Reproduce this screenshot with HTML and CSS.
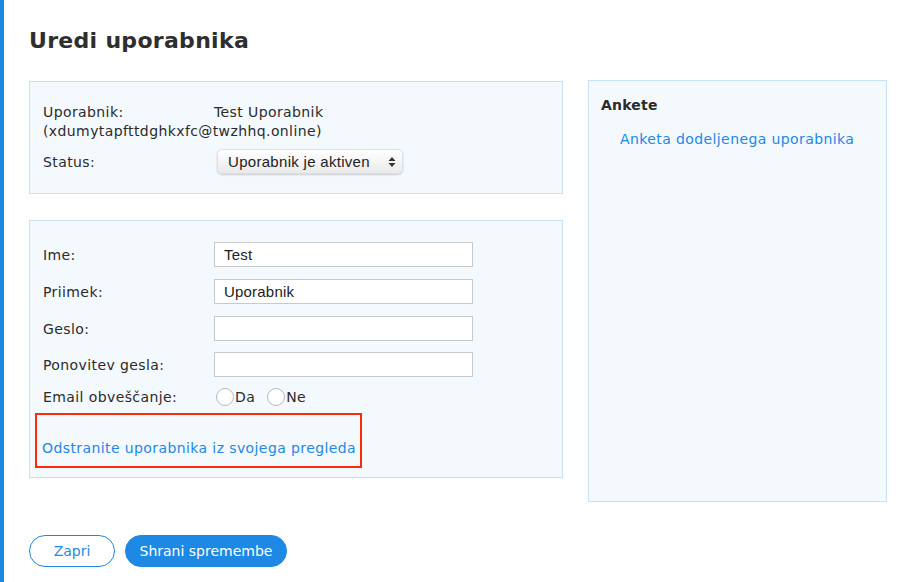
FILE: index.html
```html
<!DOCTYPE html>
<html lang="sl">
<head>
<meta charset="utf-8">
<title>Uredi uporabnika</title>
<link rel="stylesheet" href="styles.css">
</head>
<body>
<div class="page">
  <main class="content">
    <h1 class="title">Uredi uporabnika</h1>
    <div class="columns">
      <div class="left">
        <section class="box info">
          <div class="user-line"><span class="label">Uporabnik:</span><span class="value">Test Uporabnik</span> <span class="value">(xdumytapfttdghkxfc@twzhhq.online)</span></div>
          <div class="row status-row">
            <span class="label">Status:</span>
            <div class="select">
              <span>Uporabnik je aktiven</span>
              <svg class="arrows" width="8" height="12" viewBox="0 0 8 12"><path d="M4 1 L7.5 5 H0.5 Z M4 11 L7.5 7 H0.5 Z" fill="#333"/></svg>
            </div>
          </div>
        </section>
        <section class="box form">
          <div class="row field"><span class="label">Ime:</span><div class="input">Test</div></div>
          <div class="row field"><span class="label">Priimek:</span><div class="input">Uporabnik</div></div>
          <div class="row field"><span class="label">Geslo:</span><div class="input"></div></div>
          <div class="row field"><span class="label">Ponovitev gesla:</span><div class="input"></div></div>
          <div class="row radios-row">
            <span class="label">Email obveščanje:</span>
            <span class="radio"><span class="dot"></span>Da</span>
            <span class="radio"><span class="dot"></span>Ne</span>
          </div>
          <div class="highlight">
            <a class="link" href="#">Odstranite uporabnika iz svojega pregleda</a>
          </div>
        </section>
      </div>
      <aside class="box side">
        <h2 class="side-title">Ankete</h2>
        <a class="link side-link" href="#">Anketa dodeljenega uporabnika</a>
      </aside>
    </div>
    <div class="actions">
      <button class="btn btn-outline">Zapri</button>
      <button class="btn btn-primary">Shrani spremembe</button>
    </div>
  </main>
</div>
</body>
</html>
```
FILE: styles.css
```css
html, body {
  margin: 0;
  padding: 0;
  background: #fff;
}
body {
  font-family: "DejaVu Sans", "Noto Sans", sans-serif;
  font-size: 14px;
  letter-spacing: 0.4px;
  color: #2b2b2b;
}
.page {
  border-left: 4px solid #1e88e5;
  min-height: 582px;
  box-sizing: border-box;
}
.content {
  padding: 27px 0 0 25px;
}
.title {
  margin: 0;
  font-size: 22px;
  font-weight: bold;
  letter-spacing: 0.3px;
  line-height: 28px;
  color: #2e2e2e;
}
.columns {
  display: flex;
  gap: 25px;
  margin-top: 25px;
  align-items: flex-start;
}
.left {
  width: 534px;
  display: flex;
  flex-direction: column;
  gap: 26px;
  margin-top: 1px;
}
.box {
  background: #f4f9fe;
  border: 1px solid #c6e1f8;
  box-sizing: border-box;
}
.info {
  padding: 21px 13px 19px;
  height: 113px;
}
.label {
  display: inline-block;
  width: 171px;
}
.user-line {
  line-height: 19px;
}
.row {
  display: flex;
  align-items: center;
}
.status-row {
  margin-top: 8px;
}
.select {
  margin-left: 3px;
  width: 186px;
  height: 25px;
  box-sizing: border-box;
  border: 1px solid #cfe3f5;
  border-radius: 5px;
  background: linear-gradient(#ffffff, #f3f3f3 60%, #e9e9e9);
  box-shadow: 0 1px 2px rgba(0,0,0,0.18);
  display: flex;
  align-items: center;
  justify-content: space-between;
  padding: 0 6px 0 10px;
  font-family: "Liberation Sans", Arial, sans-serif;
  font-size: 15px;
  letter-spacing: 0.3px;
  color: #222;
}
.form {
  padding: 21px 13px 9px;
  height: 258px;
}
.field {
  margin-bottom: 12px;
}
.field:nth-child(3) {
  margin-bottom: 11px;
}
.input {
  width: 259px;
  height: 25px;
  box-sizing: border-box;
  border: 1px solid #c9c9c9;
  background: #fff;
  padding: 0 9px;
  font-family: "Liberation Sans", Arial, sans-serif;
  font-size: 15px;
  letter-spacing: 0.2px;
  line-height: 23px;
  color: #222;
}
.radios-row {
  margin-top: -2px;
  height: 20px;
}
.radio {
  display: inline-flex;
  align-items: center;
  margin-right: 12px;
}
.radios-row .label {
  width: 173px;
}
.dot {
  width: 18px;
  height: 18px;
  box-sizing: border-box;
  border: 1px solid #b9b9b9;
  border-radius: 50%;
  background: #fff;
  margin-right: 1px;
}
.highlight {
  margin: 6px 0 0 -8px;
  width: 327px;
  height: 55px;
  box-sizing: border-box;
  border: 2px solid #fb2a0a;
  padding: 24px 0 0 5px;
  line-height: 19px;
  white-space: nowrap;
}
.link {
  color: #1e88e5;
  text-decoration: none;
}
.side {
  width: 299px;
  height: 422px;
  padding: 15px 12px;
}
.side-title {
  margin: 0;
  font-size: 14px;
  font-weight: bold;
  letter-spacing: 0.2px;
  line-height: 19px;
  color: #2b2b2b;
}
.side-link {
  display: block;
  margin: 15px 0 0 19px;
  line-height: 19px;
}
.actions {
  display: flex;
  gap: 10px;
  margin-top: 33px;
}
.btn {
  height: 32px;
  border-radius: 16px;
  font-family: "DejaVu Sans", sans-serif;
  font-size: 14px;
  letter-spacing: 0;
  box-sizing: border-box;
  cursor: pointer;
  padding: 0;
}
.btn-outline {
  width: 86px;
  background: #fff;
  border: 1px solid #1e88e5;
  color: #1e88e5;
}
.btn-primary {
  width: 162px;
  background: #1e88e5;
  border: 1px solid #1e88e5;
  color: #fff;
}
```
